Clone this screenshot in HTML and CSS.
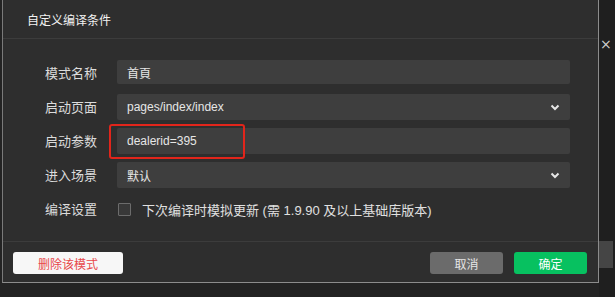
FILE: index.html
```html
<!DOCTYPE html>
<html lang="zh-CN">
    <head>
        <title>自定义编译条件</title>
        <link rel="stylesheet" href="styles.css">
    </head>

    <body>
        <div class="screen">
            <div class="dialog">
                <div class="dialogHead">自定义编译条件</div>

                <div class="dialogBody">
                    <div class="formRow">
                        <label class="rowLabel" for="modeName">模式名称</label>
                        <div class="field short">
                            <input type="text" id="modeName" value="首頁">
                        </div>
                    </div>
                    <div class="formRow">
                        <span class="rowLabel">启动页面</span>
                        <div class="field select">
                            <span>pages/index/index</span>
                            <svg class="chevron" width="10" height="7" viewBox="0 0 10 7"><path d="M1.5 1.5 L5 5 L8.5 1.5" fill="none" stroke="#e6e6e6" stroke-width="2"/></svg>
                        </div>
                    </div>
                    <div class="formRow">
                        <label class="rowLabel" for="params">启动参数</label>
                        <div class="field">
                            <input type="text" id="params" value="dealerid=395">
                            <!-- red marker drawn over the field -->
                            <div class="mark"></div>
                        </div>
                    </div>
                    <div class="formRow">
                        <span class="rowLabel">进入场景</span>
                        <div class="field select">
                            <span>默认</span>
                            <svg class="chevron" width="10" height="7" viewBox="0 0 10 7"><path d="M1.5 1.5 L5 5 L8.5 1.5" fill="none" stroke="#e6e6e6" stroke-width="2"/></svg>
                        </div>
                    </div>
                    <div class="formRow">
                        <span class="rowLabel">编译设置</span>
                        <div class="checkLine">
                            <span class="checkBox"></span>
                            <span>下次编译时模拟更新 (需 1.9.90 及以上基础库版本)</span>
                        </div>
                    </div>
                </div>

                <div class="dialogFoot">
                    <button class="btn btnDelete">删除该模式</button>
                    <div class="footRight">
                        <button class="btn btnCancel">取消</button>
                        <button class="btn btnOk">确定</button>
                    </div>
                </div>
            </div>

            <div class="sideStrip">
                <span class="closeX">×</span>
                <span class="sideBtn"></span>
            </div>
        </div>
    </body>
</html>
```

FILE: styles.css
```css
html, body {
    margin: 0;
    padding: 0;
}
body {
    background-color: #232323;
    font-family: "Liberation Sans", "Noto Sans CJK SC", sans-serif;
    color: #e4e4e4;
    width: 615px;
    height: 297px;
    overflow: hidden;
}
.screen {
    display: flex;
    padding-left: 2px;
}
.dialog {
    width: 597px;
    height: 283px;
    background-color: #2e2e2e;
    border-left: 1px solid #7a7a7a;
    border-right: 1px solid #8c8c8c;
    border-bottom: 1px solid #8c8c8c;
    box-sizing: border-box;
    display: flex;
    flex-direction: column;
}
.dialogHead {
    height: 38px;
    border-bottom: 1px solid #3c3c3c;
    padding-left: 24px;
    line-height: 40px;
    font-size: 12px;
    color: #f2f2f2;
    font-family: "Noto Sans CJK SC", sans-serif;
}
.dialogBody {
    flex: 1;
    padding: 21px 28px 0 42px;
    display: flex;
    flex-direction: column;
    gap: 8px;
}
.formRow {
    display: flex;
    align-items: flex-start;
    height: 26px;
}
.rowLabel {
    width: 72px;
    font-size: 13px;
    line-height: 26px;
    color: #dcdcdc;
    font-family: "Noto Sans CJK SC", sans-serif;
}
.field {
    flex: 1;
    height: 26px;
    background-color: #3e3e3e;
    border-radius: 2px;
    position: relative;
    display: flex;
    align-items: center;
    padding: 0 10px;
    font-size: 12px;
    color: #e6e6e6;
}
.field.short {
    height: 24px;
}
.field input {
    background: none;
    border: none;
    outline: none;
    color: #e6e6e6;
    font-family: "Liberation Sans", "Noto Sans CJK SC", sans-serif;
    font-size: 12px;
    padding: 0;
    width: 100%;
}
.select {
    justify-content: space-between;
}
.chevron {
    margin-right: 0;
}
.mark {
    position: absolute;
    left: -8px;
    top: -4px;
    width: 132px;
    height: 31px;
    border: 2px solid #e1251b;
    border-radius: 3px;
}
.checkLine {
    display: flex;
    align-items: center;
    gap: 11px;
    height: 26px;
    font-size: 13px;
    color: #e0e0e0;
    padding-left: 1px;
}
.checkBox {
    width: 11px;
    height: 11px;
    border: 1px solid #6c6c6c;
    background-color: #383838;
    border-radius: 1px;
}
.dialogFoot {
    height: 41px;
    border-top: 1px solid #3c3c3c;
    box-sizing: border-box;
    display: flex;
    justify-content: space-between;
    align-items: flex-start;
    padding: 10px 11px 0 10px;
}
.footRight {
    display: flex;
    gap: 11px;
}
.btn {
    height: 22px;
    border: none;
    border-radius: 3px;
    font-size: 12px;
    font-family: "Noto Sans CJK SC", sans-serif;
    padding: 0;
    cursor: pointer;
}
.btnDelete {
    width: 110px;
    background-color: #f7f7f7;
    color: #e8484a;
}
.btnCancel {
    width: 73px;
    background-color: #6b6b6b;
    color: #e6e6e6;
}
.btnOk {
    width: 73px;
    background-color: #07c160;
    color: #ffffff;
}
.sideStrip {
    flex: 1;
    height: 297px;
    background-color: #1f1f1f;
    position: relative;
}
.closeX {
    position: absolute;
    left: 1px;
    top: 36px;
    font-size: 14px;
    color: #cfcfcf;
    font-family: "DejaVu Sans", sans-serif;
}
.sideBtn {
    position: absolute;
    left: 0;
    top: 241px;
    width: 14px;
    height: 27px;
    background-color: #454545;
}
```
